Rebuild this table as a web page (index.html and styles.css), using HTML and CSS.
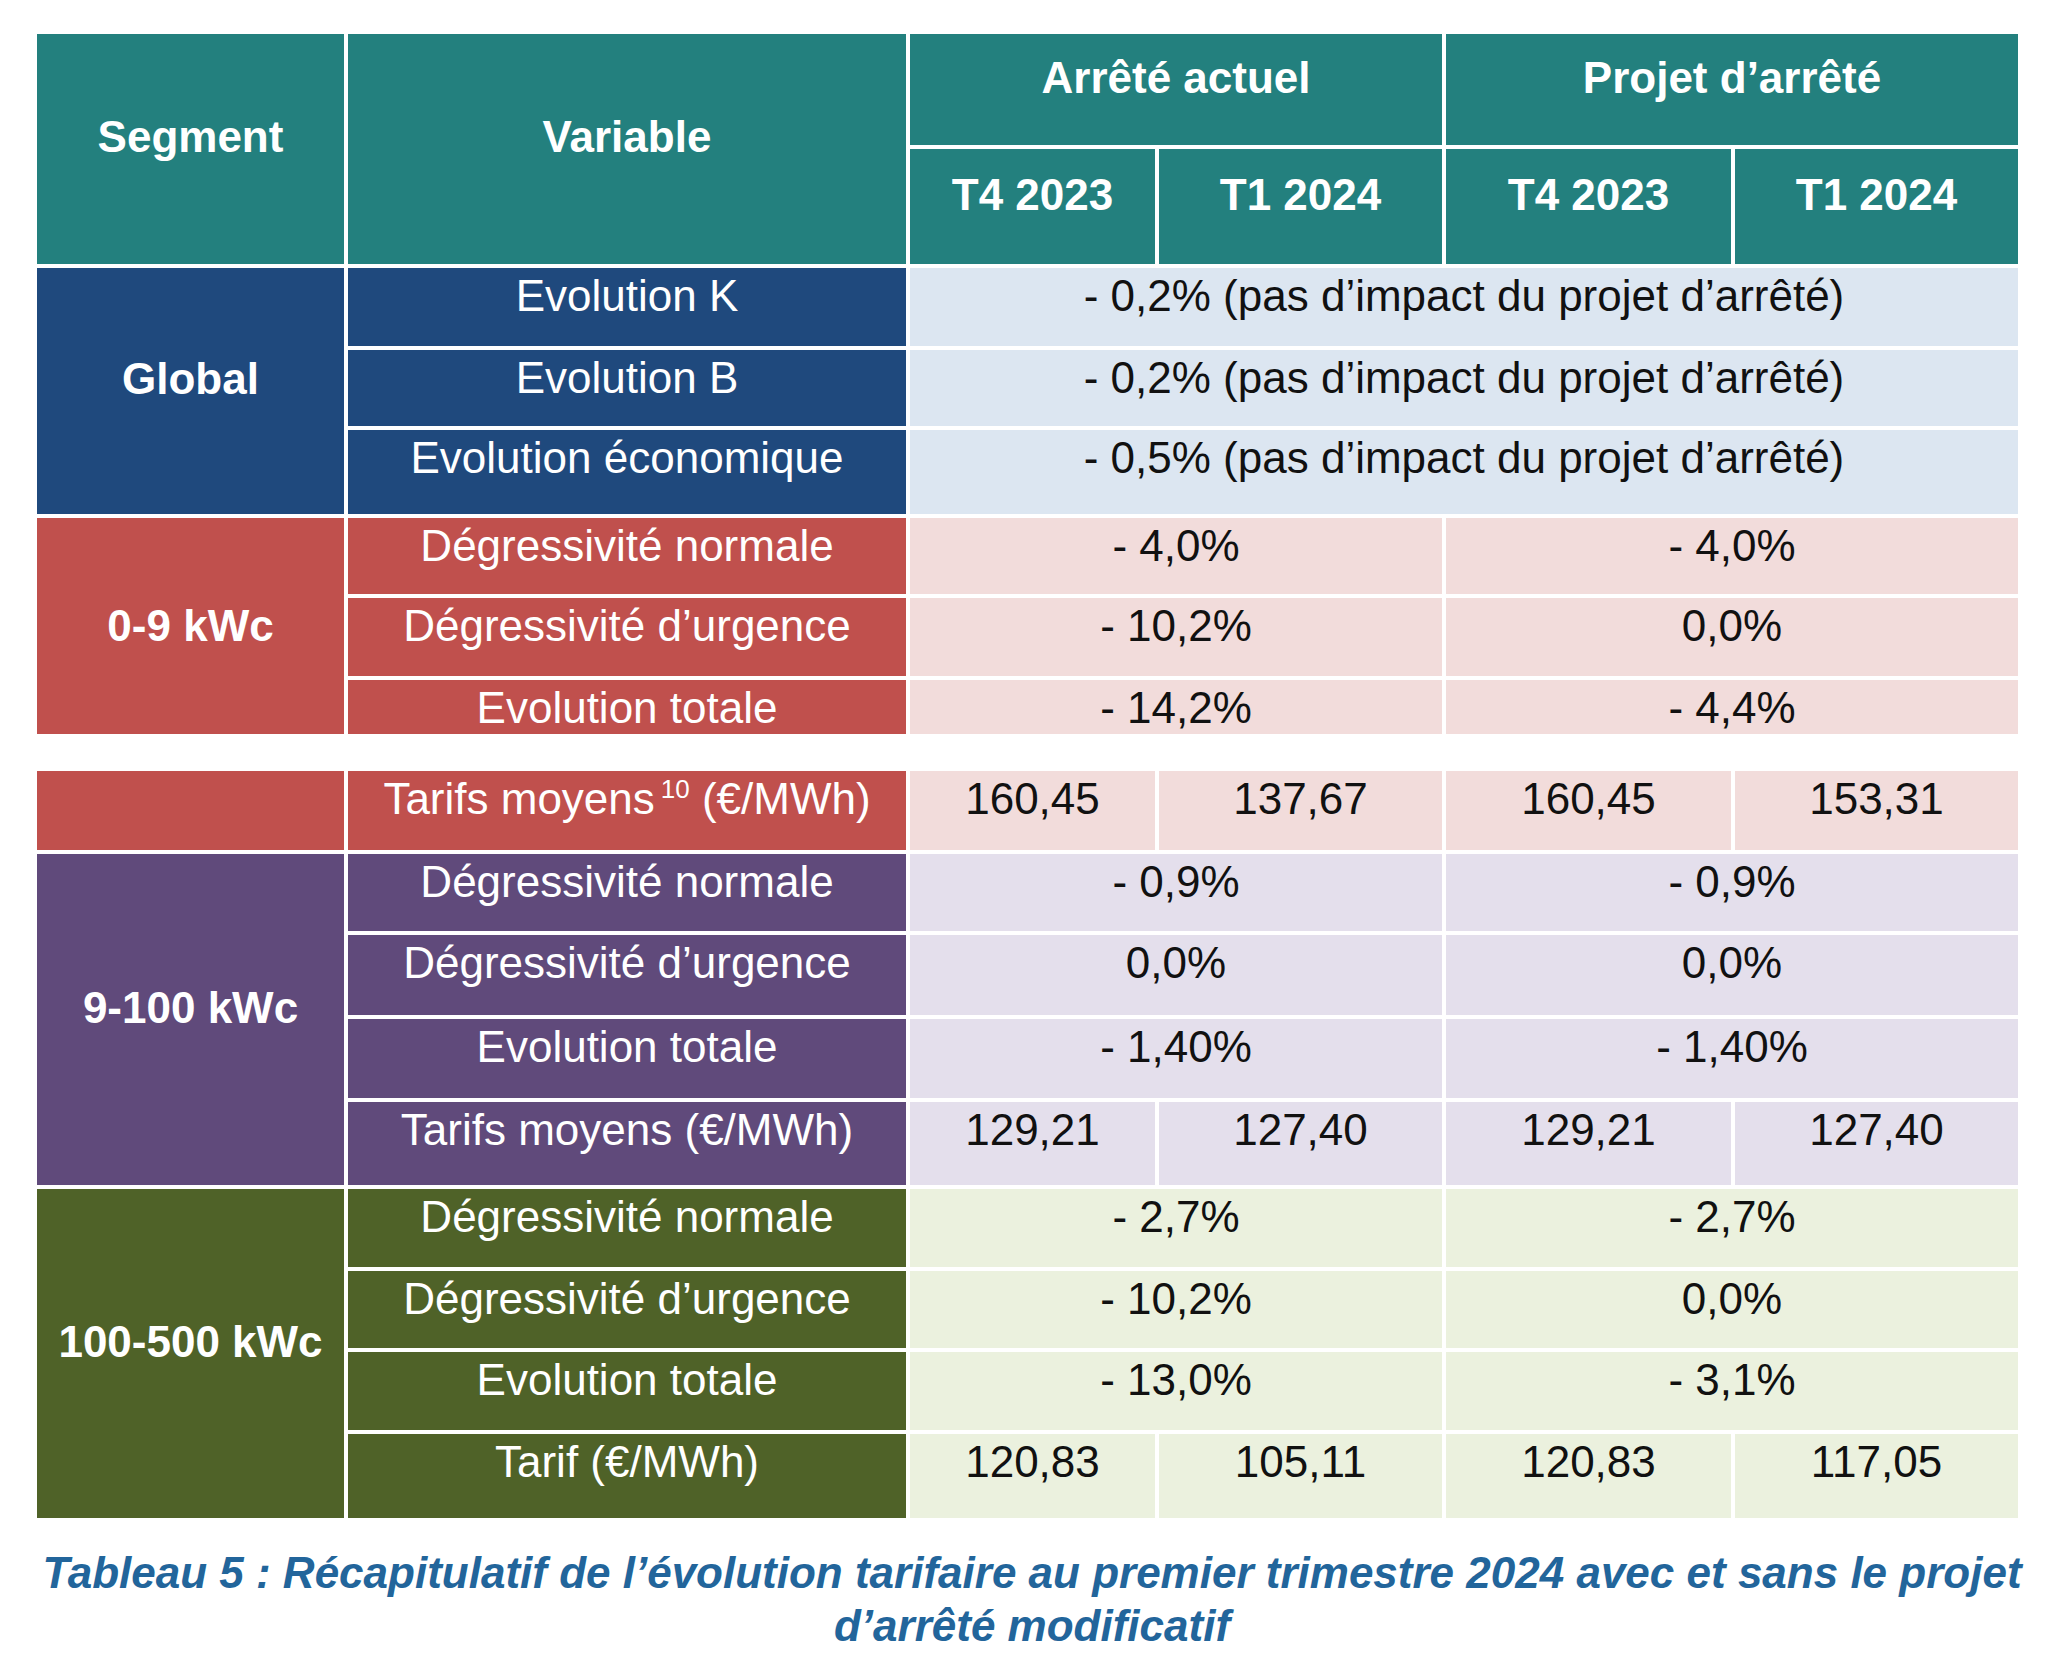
FILE: index.html
```html
<!DOCTYPE html>
<html lang="fr">
<head>
<meta charset="utf-8">
<title>Tableau 5</title>
<link rel="stylesheet" href="styles.css">
</head>
<body>
<div class="page">
  <div class="grid grid-top">
    <div class="c hd seg-h">Segment</div>
    <div class="c hd var-h">Variable</div>
    <div class="c hd grp a-grp">Arrêté actuel</div>
    <div class="c hd grp p-grp">Projet d’arrêté</div>
    <div class="c hd sub">T4 2023</div>
    <div class="c hd sub">T1 2024</div>
    <div class="c hd sub">T4 2023</div>
    <div class="c hd sub">T1 2024</div>

    <div class="c seg navy span3">Global</div>
    <div class="c var navy">Evolution K</div>
    <div class="c val lblue all">- 0,2% (pas d’impact du projet d’arrêté)</div>
    <div class="c var navy">Evolution B</div>
    <div class="c val lblue all">- 0,2% (pas d’impact du projet d’arrêté)</div>
    <div class="c var navy">Evolution économique</div>
    <div class="c val lblue all">- 0,5% (pas d’impact du projet d’arrêté)</div>

    <div class="c seg red span3 seg-center">0-9 kWc</div>
    <div class="c var red">Dégressivité normale</div>
    <div class="c val lred half">- 4,0%</div>
    <div class="c val lred half">- 4,0%</div>
    <div class="c var red">Dégressivité d’urgence</div>
    <div class="c val lred half">- 10,2%</div>
    <div class="c val lred half">0,0%</div>
    <div class="c var red">Evolution totale</div>
    <div class="c val lred half">- 14,2%</div>
    <div class="c val lred half">- 4,4%</div>
  </div>

  <div class="grid grid-bottom">
    <div class="c seg red"></div>
    <div class="c var red"><span>Tarifs moyens<sup>10</sup> (€/MWh)</span></div>
    <div class="c val lred">160,45</div>
    <div class="c val lred">137,67</div>
    <div class="c val lred">160,45</div>
    <div class="c val lred">153,31</div>

    <div class="c seg purple span4">9-100 kWc</div>
    <div class="c var purple">Dégressivité normale</div>
    <div class="c val lpurple half">- 0,9%</div>
    <div class="c val lpurple half">- 0,9%</div>
    <div class="c var purple">Dégressivité d’urgence</div>
    <div class="c val lpurple half">0,0%</div>
    <div class="c val lpurple half">0,0%</div>
    <div class="c var purple">Evolution totale</div>
    <div class="c val lpurple half">- 1,40%</div>
    <div class="c val lpurple half">- 1,40%</div>
    <div class="c var purple">Tarifs moyens (€/MWh)</div>
    <div class="c val lpurple">129,21</div>
    <div class="c val lpurple">127,40</div>
    <div class="c val lpurple">129,21</div>
    <div class="c val lpurple">127,40</div>

    <div class="c seg green span4">100-500 kWc</div>
    <div class="c var green">Dégressivité normale</div>
    <div class="c val lgreen half">- 2,7%</div>
    <div class="c val lgreen half">- 2,7%</div>
    <div class="c var green">Dégressivité d’urgence</div>
    <div class="c val lgreen half">- 10,2%</div>
    <div class="c val lgreen half">0,0%</div>
    <div class="c var green">Evolution totale</div>
    <div class="c val lgreen half">- 13,0%</div>
    <div class="c val lgreen half">- 3,1%</div>
    <div class="c var green">Tarif (€/MWh)</div>
    <div class="c val lgreen">120,83</div>
    <div class="c val lgreen">105,11</div>
    <div class="c val lgreen">120,83</div>
    <div class="c val lgreen">117,05</div>
  </div>

  <p class="caption">Tableau 5 : Récapitulatif de l’évolution tarifaire au premier trimestre 2024 avec et sans le projet d’arrêté modificatif</p>
</div>
</body>
</html>
```

FILE: styles.css
```css
html, body {
  margin: 0;
  padding: 0;
  background: #ffffff;
}

body {
  font-family: "Liberation Sans", Arial, sans-serif;
  font-size: 44px;
  color: #111111;
}

.page {
  width: 1981px;
  padding: 34px 0 0 37px;
}

.grid {
  display: grid;
  grid-template-columns: 307px 558px 245px 283px 285px 283px;
  gap: 4px;
}

.grid-top {
  grid-template-rows: 111px 115px 78px 76px 84px 76px 78px 54px;
}

.grid-bottom {
  margin-top: 37px;
  grid-template-rows: 79px 77px 80px 79px 83px 78px 77px 78px 84px;
}

.c {
  display: flex;
  justify-content: center;
  align-items: flex-start;
  padding-top: 3px;
  box-sizing: border-box;
  line-height: 50px;
  white-space: nowrap;
  overflow: hidden;
}

.hd {
  background: #23807e;
  color: #ffffff;
  font-weight: bold;
  align-items: center;
  padding-top: 0;
  padding-bottom: 24px;
}

.seg-h {
  grid-row: span 2;
}

.var-h {
  grid-row: span 2;
}

.grp {
  grid-column: span 2;
}

.seg {
  color: #ffffff;
  font-weight: bold;
  align-items: center;
  padding-top: 0;
  padding-bottom: 24px;
}

.seg-center {
  padding-bottom: 0;
}

.span3 {
  grid-row: span 3;
}

.span4 {
  grid-row: span 4;
}

.var {
  color: #ffffff;
}

.all {
  grid-column: span 4;
}

.half {
  grid-column: span 2;
}

.navy { background: #1f497d; }
.red { background: #c0504d; }
.purple { background: #604a7b; }
.green { background: #4f6228; }

.lblue { background: #dce6f1; }
.lred { background: #f2dcdb; }
.lpurple { background: #e4dfec; }
.lgreen { background: #ebf1de; }

sup {
  font-size: 26px;
  line-height: 0;
  vertical-align: 16px;
  margin-left: 6px;
}

.caption {
  margin: 28px 0 0 0;
  width: 1990px;
  text-align: center;
  font-weight: bold;
  font-style: italic;
  color: #22659b;
  line-height: 53px;
}
```
